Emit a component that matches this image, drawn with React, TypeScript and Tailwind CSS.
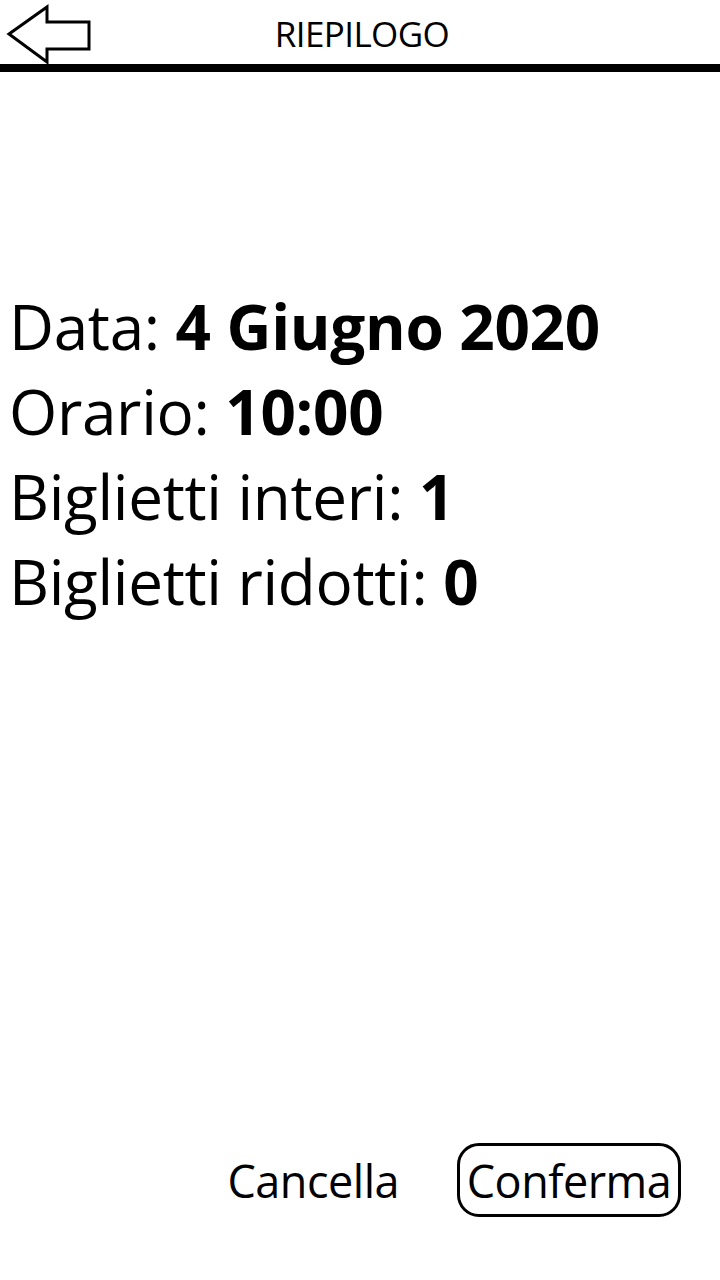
import React from 'react';

const rows: { label: string; value: string }[] = [
  { label: 'Data:', value: '4 Giugno 2020' },
  { label: 'Orario:', value: '10:00' },
  { label: 'Biglietti interi:', value: '1' },
  { label: 'Biglietti ridotti:', value: '0' },
];

const BackArrow = () => (
  <svg width="96" height="64" viewBox="0 0 96 64" className="block">
    <path
      d="M9 34 L47 7 L47 22 L89 22 L89 49 L47 49 L47 62 Z"
      fill="white"
      stroke="black"
      strokeWidth="3"
      strokeLinejoin="miter"
    />
  </svg>
);

export default function App() {
  return (
    <div
      className="w-[720px] h-[1280px] bg-white text-black flex flex-col overflow-hidden"
      style={{ fontFamily: '"Open Sans", "Noto Sans", sans-serif' }}
    >
      {/* Header */}
      <div className="relative h-[64px] flex items-center justify-center">
        <div className="absolute left-0 top-0">
          <BackArrow />
        </div>
        <span className="text-[35px] leading-none pt-[2px] pl-[4px] tracking-[-0.6px]">RIEPILOGO</span>
      </div>
      <div className="h-[8px] bg-black" />

      {/* Summary */}
      <div className="pt-[212px] pl-[9px] flex flex-col">
        {rows.map((r) => (
          <div key={r.label} className="text-[62px] leading-[85px] tracking-[-0.3px] whitespace-nowrap">
            {r.label} <span className="font-bold">{r.value}</span>
          </div>
        ))}
      </div>

      <div className="flex-1" />

      {/* Actions */}
      <div className="flex items-center justify-end pr-[39px] pb-[63px] gap-[58px]">
        <button className="text-[45px] leading-none tracking-[-0.5px]">Cancella</button>
        <button className="w-[224px] h-[74px] border-[3px] border-black rounded-[22px] text-[45px] leading-none tracking-[-0.5px] flex items-center justify-center">
          Conferma
        </button>
      </div>
    </div>
  );
}
